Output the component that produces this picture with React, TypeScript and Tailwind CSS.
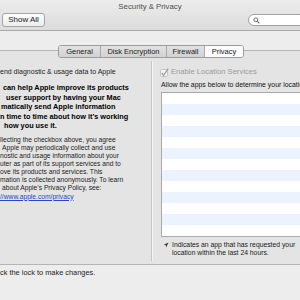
import React from "react";

const tabs = ["General", "Disk Encryption", "Firewall", "Privacy"];
const tabWidths = ["w-[41px]", "w-[66px]", "w-[38px]", "w-[39px]"];

function Check() {
  return (
    <svg width="9" height="9" viewBox="0 0 9 9" className="shrink-0">
      <rect x="0.5" y="1.5" width="7" height="7" rx="1" fill="#f4f4f4" stroke="#c4c4c4" />
      <path d="M1.8 5 L3.6 7.4 L8.2 0.6" fill="none" stroke="#a0a0a0" strokeWidth="1.3" />
    </svg>
  );
}

function Arrow() {
  return (
    <svg width="6" height="6" viewBox="0 0 24 24" className="shrink-0 mt-[1px]">
      <polygon points="3 11 22 2 13 21 11 13 3 11" fill="#3a3a3a" />
    </svg>
  );
}

export default function App() {
  return (
    <div className="w-[300px] h-[300px] overflow-hidden bg-[#ededed] text-[#1c1c1c] font-['Liberation_Sans',Arial,sans-serif]">
      {/* toolbar */}
      <div className="h-[31px] border-b border-[#a9a9a9] bg-gradient-to-b from-[#ececec] to-[#dcdcdc] pt-[2px]">
        <div className="text-center text-[7.8px] leading-[10px] text-[#4e4e4e]">Security &amp; Privacy</div>
        <div className="flex items-center justify-between mt-[1px] pl-[2px]">
          <div className="h-[14px] w-[43px] rounded-[3px] border border-[#a4a4a4] bg-gradient-to-b from-[#fdfdfd] to-[#ececec] flex items-center justify-center text-[8px] text-[#222]">
            Show All
          </div>
          <div className="h-[12px] w-[56px] -mr-[4px] rounded-l-full border border-[#a0a0a0] bg-white flex items-center pl-[4px]">
            <svg width="7" height="7" viewBox="0 0 10 10">
              <circle cx="4" cy="4" r="2.8" fill="none" stroke="#666" strokeWidth="1.3" />
              <path d="M6 6 L9 9" stroke="#666" strokeWidth="1.5" />
            </svg>
          </div>
        </div>
      </div>

      {/* tabs */}
      <div className="pt-[14px]">
        <div className="relative z-10 ml-[58px] flex h-[13px] w-fit rounded-[3px] border border-[#9c9c9c] overflow-hidden">
          {tabs.map((t, i) => (
            <div
              key={t}
              className={`${tabWidths[i]} flex items-center justify-center text-[7.5px] ${
                i === 3 ? "bg-[#fbfbfb]" : "bg-gradient-to-b from-[#e2e2e2] to-[#d2d2d2]"
              } ${i > 0 ? "border-l border-[#a8a8a8]" : ""}`}
            >
              {t}
            </div>
          ))}
        </div>

        {/* tab box */}
        <div className="-mt-[8px] h-[215px] border-t border-b border-[#b4b4b4] bg-[#e4e4e4] flex">
          <div className="w-[151px] shrink-0 overflow-hidden pt-[15px] whitespace-nowrap">
            <div className="text-[7px] leading-[12px]">end diagnostic &amp; usage data to Apple</div>
            <div className="mt-[5px] text-[7.3px] leading-[9.5px] font-bold text-black">
              <div className="pl-[3px]">can help Apple improve its products</div>
              <div className="pl-[6px]">user support by having your Mac</div>
              <div className="pl-[1px]">matically send Apple information</div>
              <div>n time to time about how it’s working</div>
              <div className="pl-[4px]">how you use it.</div>
            </div>
            <div className="mt-[5px] text-[6.7px] leading-[8px]">
              <div>llecting the checkbox above, you agree</div>
              <div className="pl-[2px]">Apple may periodically collect and use</div>
              <div>nostic and usage information about your</div>
              <div>uter as part of its support services and to</div>
              <div>ove its products and services. This</div>
              <div>mation is collected anonymously. To learn</div>
              <div className="pl-[2px]">about Apple’s Privacy Policy, see:</div>
              <div className="mt-[1px] text-[#2446c8] underline">//www.apple.com/privacy</div>
            </div>
          </div>

          <div className="w-px shrink-0 bg-[#c6c6c6] mt-[10px] mb-[3px] shadow-[1px_0_0_#f4f4f4]" />

          <div className="w-[160px] shrink-0 pl-[9px] pt-[15px] whitespace-nowrap">
            <div className="h-[12px] flex items-center gap-[2px] -ml-[1px]">
              <Check />
              <span className="text-[7.6px] text-[#9a9a9a]">Enable Location Services</span>
            </div>
            <div className="mt-[3px] text-[6.9px] leading-[8px] text-[#111]">
              Allow the apps below to determine your location:
            </div>
            <div className="mt-[3px] w-[160px] border border-[#a9a9a9] bg-white">
              {Array.from({ length: 13 }).map((_, i) => (
                <div key={i} className={`h-[11px] ${i % 2 ? "bg-[#edf3fe]" : "bg-white"}`} />
              ))}
            </div>
            <div className="mt-[4px] flex gap-[3px] pl-[2px]">
              <Arrow />
              <div className="text-[6.8px] leading-[8px] text-[#1a1a1a]">
                <div>Indicates an app that has requested your</div>
                <div>location within the last 24 hours.</div>
              </div>
            </div>
          </div>
        </div>

        <div className="pt-[3px] text-[7.4px] leading-[10px]">ck the lock to make changes.</div>
      </div>
    </div>
  );
}
